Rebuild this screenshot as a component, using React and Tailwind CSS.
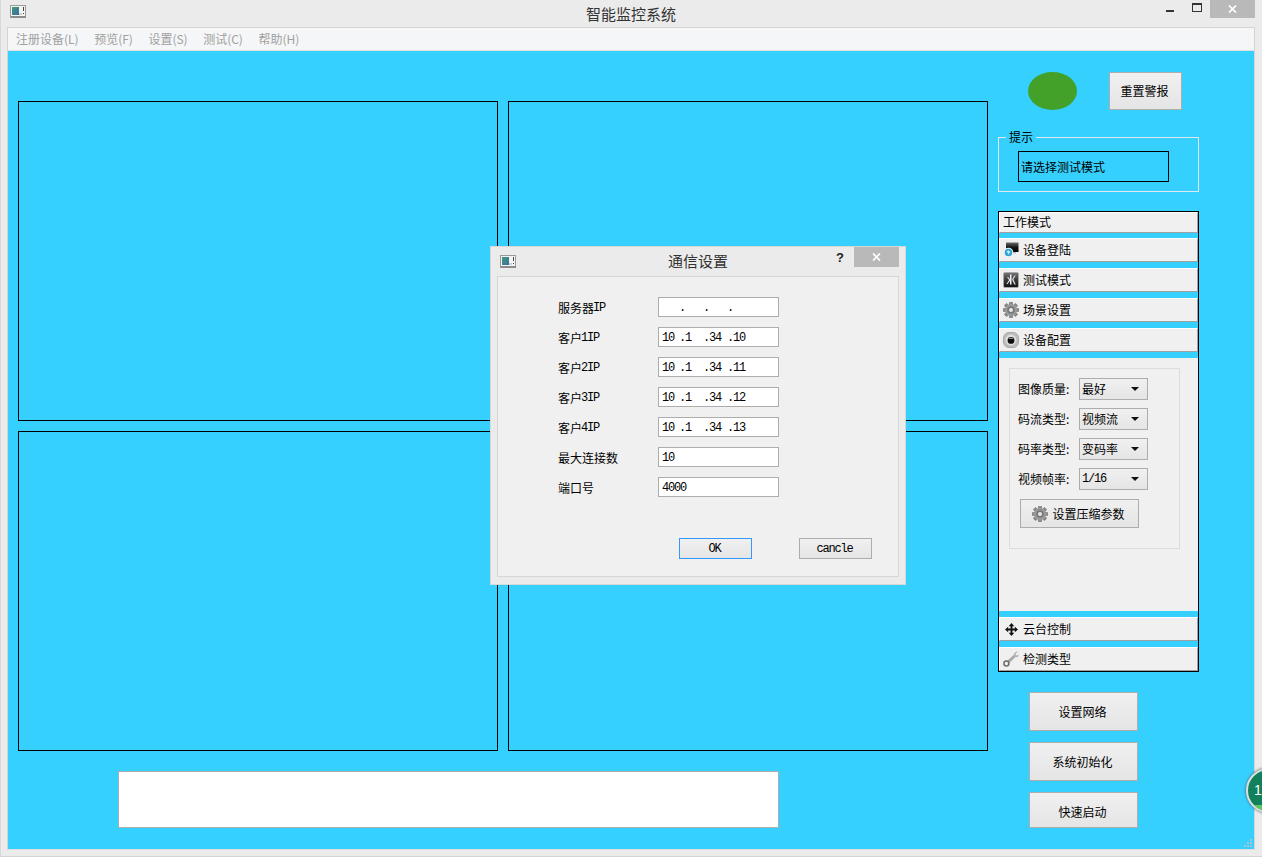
const cjk = "font-['Noto_Sans_CJK_SC','Liberation_Sans',sans-serif]";

function WinIcon() {
  return (
    <svg width="16" height="13" viewBox="0 0 16 13" className="block">
      <rect x="0.5" y="0.5" width="15" height="12" fill="#f4f4f4" stroke="#9a9a9a" />
      <rect x="1" y="11" width="15" height="2" fill="#8c8c8c" />
      <defs>
        <linearGradient id="wi" x1="0" y1="0" x2="1" y2="1">
          <stop offset="0" stopColor="#3f9a7d" />
          <stop offset="1" stopColor="#3c6ea0" />
        </linearGradient>
      </defs>
      <rect x="2" y="2" width="7" height="8" fill="url(#wi)" />
      <rect x="13" y="2" width="1" height="4" fill="#444" />
      <rect x="13" y="8" width="1" height="1" fill="#444" />
      <rect x="9" y="8" width="3" height="2" fill="#cfcfcf" />
    </svg>
  );
}

function CloseBtn({ w, h }) {
  return (
    <div className={`${w} ${h} bg-[#b9b9b9] flex items-center justify-center`}>
      <svg width="9" height="8" viewBox="0 0 9 8">
        <path d="M1 0.5 L8 7.5 M8 0.5 L1 7.5" stroke="#fff" strokeWidth="1.7" />
      </svg>
    </div>
  );
}

function Gear({ size = 16 }) {
  const teeth = [0, 45, 90, 135, 180, 225, 270, 315];
  return (
    <svg width={size} height={size} viewBox="0 0 16 16">
      {teeth.map((a) => (
        <rect key={a} x="6.2" y="0" width="3.6" height="16" rx="0.8" fill="#8a8a8a" transform={`rotate(${a} 8 8)`} />
      ))}
      <circle cx="8" cy="8" r="6" fill="#9a9a9a" />
      <circle cx="8" cy="8" r="3.8" fill="#787878" />
      <circle cx="8" cy="8" r="2" fill="#e8e8e8" />
    </svg>
  );
}

function LoginIcon() {
  return (
    <svg width="16" height="16" viewBox="0 0 16 16">
      <defs>
        <linearGradient id="mon" x1="0" y1="0" x2="0" y2="1">
          <stop offset="0" stopColor="#6a6a6a" />
          <stop offset="0.5" stopColor="#161616" />
          <stop offset="1" stopColor="#000" />
        </linearGradient>
      </defs>
      <rect x="3" y="0.5" width="12.5" height="9.5" fill="url(#mon)" />
      <rect x="8" y="10" width="5" height="1.5" fill="#bbb" />
      <circle cx="5.5" cy="10.5" r="4.8" fill="#e9f6fb" />
      <circle cx="5.5" cy="10.5" r="3.8" fill="#35a3d6" />
      <path d="M3.6 9.3 L6 8.4 L7.4 10 L5.4 12.4 L4.6 10.8 Z" fill="#c5ecf7" />
    </svg>
  );
}

function TestIcon() {
  return (
    <svg width="16" height="16" viewBox="0 0 16 16">
      <defs>
        <linearGradient id="tst" x1="0" y1="0" x2="0" y2="1">
          <stop offset="0" stopColor="#777" />
          <stop offset="0.5" stopColor="#3a3a3a" />
          <stop offset="1" stopColor="#111" />
        </linearGradient>
      </defs>
      <rect x="0.5" y="0.5" width="15" height="15" rx="1.5" fill="url(#tst)" stroke="#a8a8a8" />
      <path d="M8.5 2.5 V12.5 H7 V8.8 L4.5 12 H3.4 L6.2 8 L4 5.2 H5.4 L7 7.2 V2.5 Z" fill="#f0f0f0" />
      <path d="M9 7.5 L11.5 3.5 L12.6 3.5 L10.4 7.5 L12.8 12.5 L11.4 12.5 Z" fill="#e0e0e0" />
    </svg>
  );
}

function CameraIcon() {
  return (
    <svg width="16" height="16" viewBox="0 0 16 16">
      <rect x="0.5" y="0.5" width="15" height="15" rx="5.5" fill="#bdbdbd" stroke="#a9a9a9" />
      <circle cx="8" cy="8" r="5.4" fill="#dedede" />
      <circle cx="8" cy="8.4" r="3.4" fill="#0e0e0e" />
      <rect x="5.6" y="5.6" width="4.8" height="1.4" fill="#8a8a8a" />
    </svg>
  );
}

function MoveIcon() {
  return (
    <svg width="13" height="13" viewBox="0 0 14 14">
      <path d="M7 0 L10 3.4 H8 V6 H10.6 V4 L14 7 L10.6 10 V8 H8 V10.6 H10 L7 14 L4 10.6 H6 V8 H3.4 V10 L0 7 L3.4 4 V6 H6 V3.4 H4 Z" fill="#111" />
    </svg>
  );
}

function WrenchIcon() {
  return (
    <svg width="16" height="16" viewBox="0 0 16 16">
      <path d="M3.6 12.4 L11.6 5" stroke="#aaa" strokeWidth="3" strokeLinecap="round" />
      <path d="M11 5.6 C10 3 12 0.6 15 0.6 L12.6 3 L13.2 4.6 L15.8 3.4 C15.6 6 13.4 7.2 11 5.6 Z" fill="#b5b5b5" />
      <circle cx="3.4" cy="12.6" r="2.5" fill="#eee" stroke="#6e6e6e" strokeWidth="1.5" />
    </svg>
  );
}

function ToolHeader({ icon, label, first }) {
  return (
    <div className={`${first ? "h-[21px] pl-[3px] pb-[2px]" : "h-[24px]"} shrink-0 flex items-center bg-[#f0f0f0] border border-t-white border-l-white border-b-[#a0a0a0] border-r-[#a0a0a0]`}>
      {!first && <div className="w-[22px] mr-[1px] h-full flex items-center justify-center">{icon}</div>}
      <span className="text-[12px] text-black leading-none">{label}</span>
    </div>
  );
}

function Combo({ label, value, latin }) {
  return (
    <div className="flex items-center h-[22px] mb-2">
      <span className="w-[61px] text-[12px] text-black whitespace-nowrap">{label}</span>
      <div className="w-[69px] h-[22px] border border-[#adadad] bg-gradient-to-b from-[#f0f0f0] to-[#e5e5e5] flex items-center justify-between pl-[2px] pr-2">
        <span className={latin ? "font-['Liberation_Mono'] text-[12px] tracking-[-1.2px]" : "text-[12px]"}>{value}</span>
        <svg width="8" height="4" viewBox="0 0 8 4"><path d="M0 0 H8 L4 4 Z" fill="#111" /></svg>
      </div>
    </div>
  );
}

function PushButton({ children, h, extra = "" }) {
  return (
    <button className={`${h} ${extra} w-[109px] border border-[#adadad] bg-gradient-to-b from-[#f0f0f0] to-[#e5e5e5] text-[12px] text-black flex items-center justify-center pr-[2px]`}>
      {children}
    </button>
  );
}

function IpRow({ label, parts, value }) {
  return (
    <div className="flex items-center h-5 mb-[10px]">
      <span className="w-[100px] text-[12px] text-black flex pt-[1px]">
        {label}
      </span>
      <div className="w-[121px] h-5 border border-[#adadad] bg-white flex items-center pl-[3px] pt-[1px] font-['Liberation_Mono'] text-[12px] tracking-[-1.2px] text-black">
        {parts ? (
          parts.map((p, i) => (
            <span key={i} className={`${i ? "w-6" : "w-[17px]"} shrink-0 whitespace-pre`}>{(i ? "." : "") + p}</span>
          ))
        ) : (
          value
        )}
      </div>
    </div>
  );
}

const Latin = ({ children }) => (
  <span className="font-['Liberation_Mono'] tracking-[-1.2px] -ml-[1px]">{children}</span>
);

function Dialog() {
  return (
    <div className="absolute left-[490px] top-[246px] w-[416px] h-[339px] bg-[#ebebeb] border border-[#d8d8d8] flex flex-col px-[6px] pb-[7px]">
      <div className="h-[29px] shrink-0 relative flex items-center justify-center">
        <div className="absolute left-[3px] top-[8px]"><WinIcon /></div>
        <span className="text-[15px] leading-none text-[#333] -mt-[3px]">通信设置</span>
        <span className="absolute left-[339px] top-[1px] text-[13px] font-bold text-[#222] font-['Liberation_Sans']">?</span>
        <div className="absolute right-0 top-0"><CloseBtn w="w-[45px]" h="h-5" /></div>
      </div>
      <div className="flex-1 bg-[#f0f0f0] border border-[#d6d6d6] pt-5 pl-[60px] flex flex-col">
        <IpRow label={<>服务器<Latin>IP</Latin></>} parts={["", "", "", ""]} />
        <IpRow label={<>客户<Latin>1IP</Latin></>} parts={["10", "1", "34", "10"]} />
        <IpRow label={<>客户<Latin>2IP</Latin></>} parts={["10", "1", "34", "11"]} />
        <IpRow label={<>客户<Latin>3IP</Latin></>} parts={["10", "1", "34", "12"]} />
        <IpRow label={<>客户<Latin>4IP</Latin></>} parts={["10", "1", "34", "13"]} />
        <IpRow label="最大连接数" value="10" />
        <IpRow label="端口号" value="4000" />
        <div className="flex mt-[31px] ml-[121px]">
          <button className="w-[73px] h-[21px] border border-[#3399ff] bg-gradient-to-b from-[#f0f0f0] to-[#e5e5e5] pt-[1px] pr-[2px] font-['Liberation_Mono'] text-[12px] tracking-[-1.2px] text-black">OK</button>
          <button className="ml-[47px] w-[73px] h-[21px] border border-[#adadad] bg-gradient-to-b from-[#f0f0f0] to-[#e5e5e5] pt-[1px] pr-[2px] font-['Liberation_Mono'] text-[12px] tracking-[-1.2px] text-black">cancle</button>
        </div>
      </div>
    </div>
  );
}

export default function App() {
  const menus = ["注册设备(L)", "预览(F)", "设置(S)", "测试(C)", "帮助(H)"];
  return (
    <div className={`${cjk} relative w-[1262px] h-[857px] overflow-hidden bg-[#ebebeb] shadow-[inset_1px_0_0_#d8d8d8,inset_0_-1px_0_#d4d4d4] flex flex-col`}>
      {/* title bar */}
      <div className="h-[27px] shrink-0 relative flex items-center justify-center">
        <div className="absolute left-[10px] top-[5px]"><WinIcon /></div>
        <span className="text-[15px] leading-none text-[#333] -mt-[1px]">智能监控系统</span>
        <div className="absolute left-[1166px] top-[10px] w-2 h-[2px] bg-[#333]" />
        <div className="absolute left-[1192px] top-[3px] w-[10px] h-[9px] border border-[#333] border-t-2" />
        <div className="absolute left-[1210px] top-0"><CloseBtn w="w-[45px]" h="h-[18px]" /></div>
      </div>

      {/* window frame */}
      <div className="mx-[7px] w-[1248px] h-[823px] border border-[#d4d4d4] border-b-[#dedede] flex flex-col">
        <div className="h-[23px] shrink-0 bg-[#f5f6f7] border-b border-[#e0e0e0] flex items-center gap-[15.5px] pl-2">
          {menus.map((m) => (
            <span key={m} className="text-[12px] text-[#a0a0a0] leading-none">{m}</span>
          ))}
        </div>

        {/* client */}
        <div className="flex-1 bg-[#36d0ff] flex pl-[10px]">
          {/* left column */}
          <div className="w-[970px] shrink-0 pt-[50px]">
            <div className="grid grid-cols-[480px_480px] grid-rows-[320px_320px] gap-[10px]">
              <div className="border border-black" />
              <div className="border border-black" />
              <div className="border border-black" />
              <div className="border border-black" />
            </div>
            <div className="mt-5 ml-[100px] w-[661px] h-[57px] bg-white border border-[#adadad]" />
          </div>

          {/* right column */}
          <div className="ml-[10px] w-[201px] shrink-0 pt-[21px] flex flex-col">
            <div className="flex items-center h-[38px] pl-[30px]">
              <div className="w-[49px] h-[38px] rounded-[50%] bg-[#43a12a]" />
              <button className="ml-8 w-[73px] h-[38px] border border-[#adadad] bg-gradient-to-b from-[#f0f0f0] to-[#e5e5e5] pr-[2px] text-[12px] text-black">重置警报</button>
            </div>

            <div className="relative mt-[27px] h-[55px] border border-[#e0e8ee] pl-[19px] pt-[13px]">
              <span className="absolute -top-[8px] left-[7px] px-[3px] bg-[#36d0ff] text-[12px] leading-[14px] text-black">提示</span>
              <div className="w-[151px] h-[31px] border border-black flex items-center pl-[2px] pt-[1px] text-[12px] text-black">请选择测试模式</div>
            </div>

            <div className="mt-[19px] h-[461px] border border-black flex flex-col">
              <ToolHeader first label="工作模式" />
              <div className="h-[5px] shrink-0" />
              <ToolHeader icon={<LoginIcon />} label="设备登陆" />
              <div className="h-[6px] shrink-0" />
              <ToolHeader icon={<TestIcon />} label="测试模式" />
              <div className="h-[6px] shrink-0" />
              <ToolHeader icon={<Gear />} label="场景设置" />
              <div className="h-[6px] shrink-0" />
              <ToolHeader icon={<CameraIcon />} label="设备配置" />
              <div className="h-[6px] shrink-0" />
              <div className="flex-1 bg-[#f0f0f0] pt-[10px] pl-[10px]">
                <div className="w-[171px] h-[181px] border border-[#dcdcdc] pt-[9px] pl-[8px]">
                  <Combo label="图像质量:" value="最好" />
                  <Combo label="码流类型:" value="视频流" />
                  <Combo label="码率类型:" value="变码率" />
                  <Combo label="视频帧率:" value="1/16" latin />
                  <button className="ml-[2px] mt-[9px] w-[119px] h-[29px] border border-[#adadad] bg-gradient-to-b from-[#f0f0f0] to-[#e5e5e5] flex items-center justify-center gap-[4px] pr-[2px] text-[12px] text-black">
                    <Gear />
                    设置压缩参数
                  </button>
                </div>
              </div>
              <div className="h-[6px] shrink-0" />
              <ToolHeader icon={<MoveIcon />} label="云台控制" />
              <div className="h-[6px] shrink-0" />
              <ToolHeader icon={<WrenchIcon />} label="检测类型" />
            </div>

            <div className="mt-5 ml-[31px] flex flex-col gap-[11px]">
              <PushButton h="h-[39px]">设置网络</PushButton>
              <PushButton h="h-[39px]">系统初始化</PushButton>
              <PushButton h="h-[36px]" extra="pt-[3px]">快速启动</PushButton>
            </div>
          </div>
        </div>
      </div>

      <Dialog />

      {/* floating badge */}
      <div className="absolute left-[1246px] top-[768px] w-[45px] h-[45px] rounded-full border-2 border-[#d8e2e0] overflow-hidden bg-[#12805a] flex flex-col shadow-[0_0_3px_#555]">
        <div className="flex-1 pl-[6px] pt-[5px] flex items-center text-white text-[14px] font-['Liberation_Sans']">1</div>
        <div className="h-[6px] bg-[#5cc85f]" />
      </div>

      {/* size grip */}
      <svg className="absolute left-[1243px] top-[838px]" width="10" height="10" viewBox="0 0 10 10">
        {[[7, 1], [4, 4], [7, 4], [1, 7], [4, 7], [7, 7]].map(([x, y]) => (
          <rect key={`${x}-${y}`} x={x} y={y} width="2" height="2" fill="#a4c4d0" />
        ))}
      </svg>
    </div>
  );
}
